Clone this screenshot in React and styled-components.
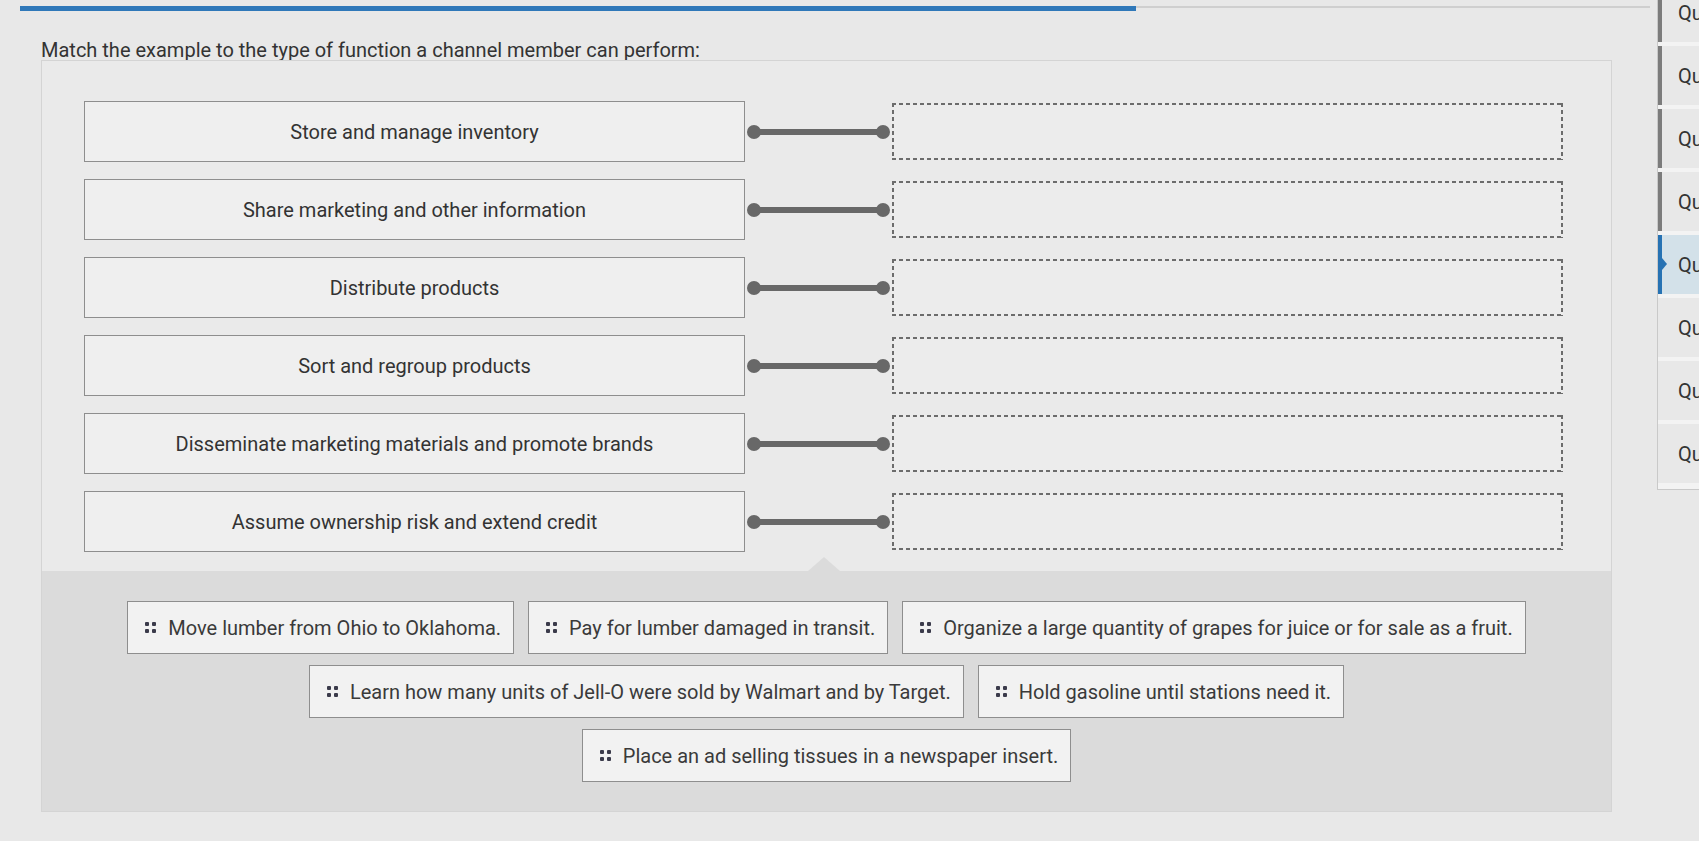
import React from 'react';
import styled, { createGlobalStyle } from 'styled-components';

const GlobalStyle = createGlobalStyle`
  html, body {
    margin: 0;
    padding: 0;
    background: #e8e8e8;
    overflow: hidden;
  }
  * {
    box-sizing: border-box;
  }
  body {
    font-family: Roboto, "Liberation Sans", Arial, sans-serif;
    color: #333333;
  }
`;

const PageWrap = styled.div`
  width: 1699px;
  height: 841px;
  display: flex;
  overflow: hidden;
`;

const MainWrap = styled.div`
  width: 1657px;
  flex-shrink: 0;
  display: flex;
  flex-direction: column;
`;

const ProgressWrap = styled.div`
  margin: 6px 7px 0 20px;
  height: 5px;
  display: flex;
  align-items: flex-start;
`;

const ProgressFill = styled.div`
  width: 1116px;
  height: 5px;
  background-color: #2f78b9;
`;

const ProgressTrack = styled.div`
  flex: 1;
  height: 2px;
  background-color: #cfcfcf;
`;

const Title = styled.p`
  margin: 29px 0 0 41px;
  font-size: 20px;
  line-height: 20px;
  color: #333333;
`;

const Panel = styled.div`
  margin: 0 0 0 41px;
  width: 1571px;
  height: 752px;
  border: 1px solid #d4d4d4;
  background-color: #eaeaea;
  display: flex;
  flex-direction: column;
`;

const MatchList = styled.div`
  padding: 40px 48px 19px 42px;
  display: flex;
  flex-direction: column;
  gap: 17px;
`;

const MatchRow = styled.div`
  display: grid;
  grid-template-columns: 661px 147px 1fr;
  align-items: center;
  height: 61px;
`;

const PromptBox = styled.div`
  height: 61px;
  border: 1px solid #8e8e8e;
  background-color: #efefef;
  display: flex;
  align-items: center;
  justify-content: center;
  font-size: 20px;
  color: #333333;
`;

const Connector = styled.div`
  display: flex;
  align-items: center;
  padding: 0 2px;
`;

const Dot = styled.span`
  width: 14px;
  height: 14px;
  border-radius: 50%;
  background-color: #686868;
  flex-shrink: 0;
`;

const Bar = styled.span`
  flex: 1;
  height: 6px;
  margin: 0 -3px;
  background-color: #686868;
`;

const dash = '#6c6c6c';

const DropZone = styled.div`
  height: 57px;
  background:
    repeating-linear-gradient(90deg, ${dash} 0 4px, transparent 4px 7px) top left / 100% 2px no-repeat,
    repeating-linear-gradient(90deg, ${dash} 0 4px, transparent 4px 7px) bottom left / 100% 2px no-repeat,
    repeating-linear-gradient(180deg, ${dash} 0 4px, transparent 4px 7px) top left / 2px 100% no-repeat,
    repeating-linear-gradient(180deg, ${dash} 0 4px, transparent 4px 7px) top right / 2px 100% no-repeat,
    #ececec;
`;

const Bank = styled.div`
  flex: 1;
  position: relative;
  background-color: #dbdbdb;
  padding: 30px 20px 20px;
  display: flex;
  flex-wrap: wrap;
  justify-content: center;
  align-content: flex-start;
  column-gap: 14px;
  row-gap: 11px;

  &::before {
    content: '';
    position: absolute;
    top: -14px;
    left: 766px;
    border-left: 16px solid transparent;
    border-right: 16px solid transparent;
    border-bottom: 14px solid #dbdbdb;
  }
`;

const Chip = styled.div`
  height: 53px;
  padding: 0 12px 0 17px;
  display: flex;
  align-items: center;
  gap: 12px;
  border: 1px solid #8e8e8e;
  background-color: #f2f2f2;
  font-size: 20px;
  color: #3a3a3a;
  white-space: nowrap;
`;

const Handle = styled.span`
  display: grid;
  grid-template-columns: 4px 4px;
  grid-template-rows: 4px 4px;
  column-gap: 3px;
  row-gap: 3px;

  i {
    display: block;
    border-radius: 1px;
    background-color: #3b3b4b;
  }
`;

const SideNav = styled.div`
  flex: 1;
  margin-top: -17px;
  align-self: flex-start;
  border-left: 1px solid #c9c9c9;
  border-bottom: 1px solid #c9c9c9;
  background-color: #f3f3f3;
  display: flex;
  flex-direction: column;
  gap: 4px;
  padding-bottom: 6px;
`;

const NavItem = styled.div`
  position: relative;
  height: 59px;
  padding-left: 16px;
  display: flex;
  align-items: center;
  font-size: 20px;
  color: #333333;
  white-space: nowrap;
  overflow: hidden;
  background-color: ${(p) => (p.$active ? '#d3e1e9' : '#e8e8e8')};
  border-left: 4px solid
    ${(p) => (p.$active ? '#2672b3' : p.$visited ? '#7c7c7c' : 'transparent')};

  &::before {
    content: '';
    display: ${(p) => (p.$active ? 'block' : 'none')};
    position: absolute;
    left: 0;
    top: 23px;
    border-top: 6px solid transparent;
    border-bottom: 6px solid transparent;
    border-left: 5px solid #2672b3;
  }
`;

const prompts = [
  'Store and manage inventory',
  'Share marketing and other information',
  'Distribute products',
  'Sort and regroup products',
  'Disseminate marketing materials and promote brands',
  'Assume ownership risk and extend credit',
];

const examples = [
  'Move lumber from Ohio to Oklahoma.',
  'Pay for lumber damaged in transit.',
  'Organize a large quantity of grapes for juice or for sale as a fruit.',
  'Learn how many units of Jell-O were sold by Walmart and by Target.',
  'Hold gasoline until stations need it.',
  'Place an ad selling tissues in a newspaper insert.',
];

const questions = [1, 2, 3, 4, 5, 6, 7, 8];

const App = () => {
  return (
    <>
      <GlobalStyle />
      <PageWrap>
        <MainWrap>
          <ProgressWrap>
            <ProgressFill />
            <ProgressTrack />
          </ProgressWrap>
          <Title>Match the example to the type of function a channel member can perform:</Title>
          <Panel>
            <MatchList>
              {prompts.map((text) => (
                <MatchRow key={text}>
                  <PromptBox>{text}</PromptBox>
                  <Connector>
                    <Dot />
                    <Bar />
                    <Dot />
                  </Connector>
                  <DropZone />
                </MatchRow>
              ))}
            </MatchList>
            <Bank>
              {examples.map((text) => (
                <Chip key={text}>
                  <Handle>
                    <i />
                    <i />
                    <i />
                    <i />
                  </Handle>
                  {text}
                </Chip>
              ))}
            </Bank>
          </Panel>
        </MainWrap>
        <SideNav>
          {questions.map((n) => (
            <NavItem key={n} $visited={n < 5} $active={n === 5}>
              Question {n}
            </NavItem>
          ))}
        </SideNav>
      </PageWrap>
    </>
  );
};

export default App;
